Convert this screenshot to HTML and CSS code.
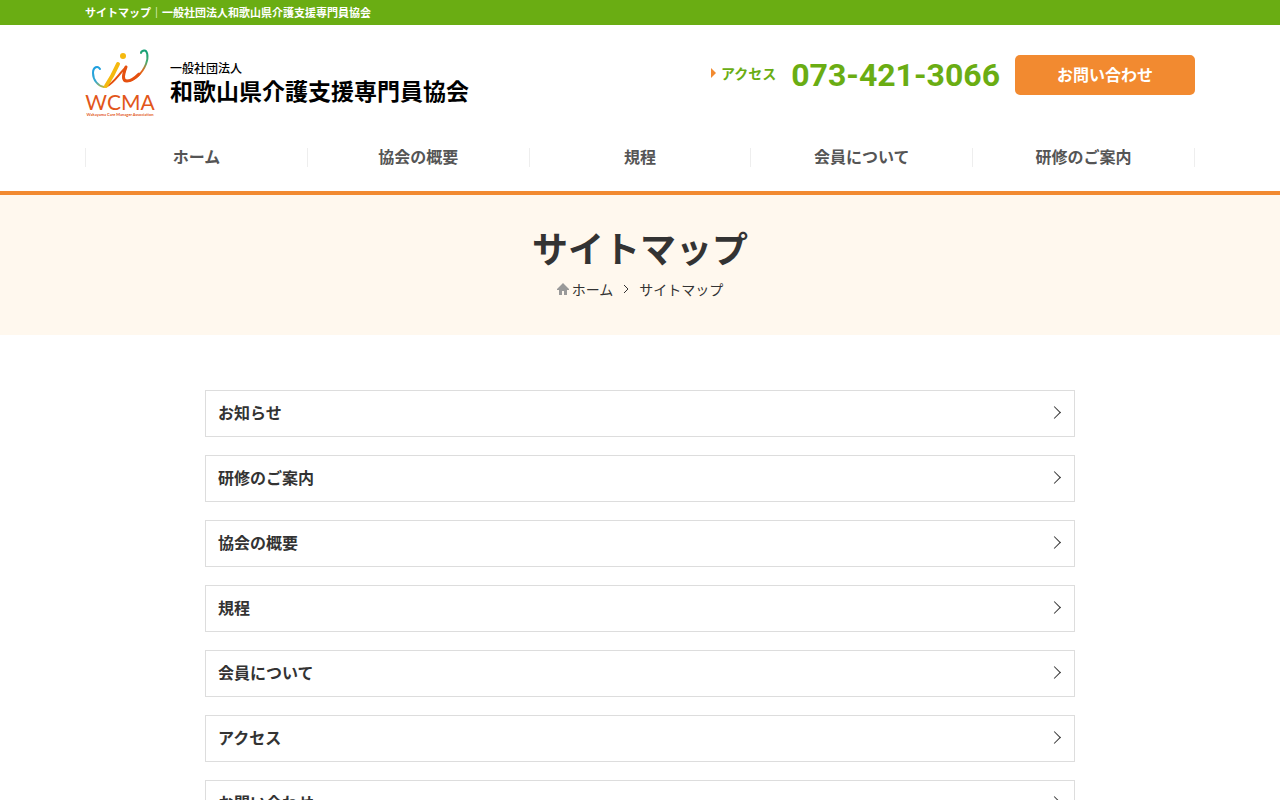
FILE: index.html
```html
<!DOCTYPE html>
<html lang="ja">
<head>
	<meta charset="UTF-8">
	<meta name="viewport" content="width=device-width, initial-scale=1.0">
	<title>サイトマップ｜一般社団法人和歌山県介護支援専門員協会</title>
	<link rel="stylesheet" href="styles.css">
</head>
<body>
	<header class="header">
		<div class="topbar">
			<h1 class="container topbar-text">サイトマップ｜一般社団法人和歌山県介護支援専門員協会</h1>
		</div>
		<div class="container header-main">
			<a class="logo" href="#">
				<svg class="logo-mark" viewBox="0 0 70 68" width="70" height="68" aria-hidden="true">
					<defs>
						<linearGradient id="swoosh-right" gradientUnits="userSpaceOnUse" x1="62" y1="2" x2="50" y2="30">
							<stop offset="0" stop-color="#12a077"/>
							<stop offset="0.35" stop-color="#4cab6e"/>
							<stop offset="0.65" stop-color="#e36a1c"/>
							<stop offset="1" stop-color="#e5500f"/>
						</linearGradient>
						<linearGradient id="swoosh-left" gradientUnits="userSpaceOnUse" x1="10" y1="18" x2="20" y2="38">
							<stop offset="0" stop-color="#1e9fe0"/>
							<stop offset="0.6" stop-color="#35a9cf"/>
							<stop offset="1" stop-color="#c9b62c"/>
						</linearGradient>
					</defs>
					<g fill="none" stroke-linecap="round" stroke-linejoin="round">
						<path d="M15 20C13 16 8 18 8 24C8 31 13 37 19 38" stroke="url(#swoosh-left)" stroke-width="2"/>
						<path d="M22 37C28 35 34 25 41 18C38 26 37 32 42 32C49 32 57 25 61 15C64 7 62 1 59 1.500C57 2 56 3 56 4" stroke="url(#swoosh-right)" stroke-width="2"/>
						<path d="M41 18C38 26 37 32 42 32C46 32 50 29 54 25" stroke="#e5500f" stroke-width="3"/>
						<path d="M33 15C29 24 25 31 21 37" stroke="#f5b90f" stroke-width="4"/>
					</g>
					<circle cx="38" cy="7" r="3" fill="#f5b90f"/>
					<text class="mark-name" x="35" y="61" text-anchor="middle">WCMA</text>
					<text class="mark-sub" x="35" y="67" text-anchor="middle">Wakayama Care Manager Association</text>
				</svg>
				<span class="logo-text">
					<span class="logo-kind">一般社団法人</span>
					<span class="logo-name">和歌山県介護支援専門員協会</span>
				</span>
			</a>
			<div class="header-contact">
				<a class="access" href="#">アクセス</a>
				<a class="tel" href="tel:073-421-3066">073-421-3066</a>
				<a class="btn-contact" href="#">お問い合わせ</a>
			</div>
		</div>
		<nav class="container gnav">
			<a href="#">ホーム</a>
			<a href="#">協会の概要</a>
			<a href="#">規程</a>
			<a href="#">会員について</a>
			<a href="#">研修のご案内</a>
		</nav>
	</header>

	<div class="page-title">
		<h2>サイトマップ</h2>
		<div class="breadcrumb">
			<a href="#">
				<svg viewBox="0 0 12 12" width="12" height="12" aria-hidden="true"><path d="M6 0L12 6V7H10V12H7V8H5V12H2V7H0V6Z" fill="#999"/></svg>
				ホーム
			</a>
			<svg viewBox="0 0 6 10" width="6" height="10" aria-hidden="true"><path d="M1 1L5 5L1 9" fill="none" stroke="#333"/></svg>
			<span>サイトマップ</span>
		</div>
	</div>

	<main>
		<ul class="sitemap">
			<li><a href="#">お知らせ</a></li>
			<li><a href="#">研修のご案内</a></li>
			<li><a href="#">協会の概要</a></li>
			<li><a href="#">規程</a></li>
			<li><a href="#">会員について</a></li>
			<li><a href="#">アクセス</a></li>
			<li><a href="#">お問い合わせ</a></li>
		</ul>
	</main>
</body>
</html>
```

FILE: styles.css
```css
* {
	box-sizing: border-box;
}
body {
	margin: 0;
	font-family: "Noto Sans CJK JP", sans-serif;
	font-size: 16px;
	line-height: 24px;
	color: #333;
	background: #fff;
}
a {
	color: inherit;
	text-decoration: none;
}
.container {
	max-width: 1110px;
	margin: 0 auto;
}
.header {
	border-bottom: 4px solid #f28a30;
}
.topbar {
	background: #6aad13;
	color: #fff;
}
.topbar-text {
	font-size: 11px;
	line-height: 25px;
	font-weight: bold;
}
.header-main {
	display: flex;
	justify-content: space-between;
	align-items: flex-start;
	padding-top: 24px;
}
.logo {
	display: flex;
	gap: 15px;
	color: #000;
}
.logo-mark {
	overflow: visible;
}
.mark-name {
	font-family: Lato, sans-serif;
	font-size: 21px;
	fill: #e2561a;
}
.mark-sub {
	font-family: Lato, sans-serif;
	font-size: 4px;
	font-weight: bold;
	fill: #e2561a;
}
.logo-text {
	display: flex;
	flex-direction: column;
	padding-top: 11px;
	font-weight: 500;
}
.logo-kind {
	font-size: 12px;
	line-height: 16px;
}
.logo-name {
	font-size: 23px;
	line-height: 28px;
	font-weight: bold;
}
.header-contact {
	display: flex;
	align-items: center;
	gap: 15px;
	padding-top: 6px;
}
.access {
	display: flex;
	align-items: center;
	gap: 5px;
	padding-bottom: 4px;
	font-size: 14px;
	font-weight: bold;
	color: #6aad13;
}
.access::before {
	content: "";
	border: 5px solid transparent;
	border-left-color: #f28a30;
	border-right: 0;
}
.tel {
	font-family: Roboto, sans-serif;
	font-size: 32px;
	line-height: 40px;
	font-weight: bold;
	color: #6aad13;
}
.btn-contact {
	width: 180px;
	padding-bottom: 2px;
	border-radius: 5px;
	background: #f28a30;
	color: #fff;
	font-weight: bold;
	line-height: 38px;
	text-align: center;
}
.gnav {
	display: flex;
	padding: 31px 0 24px;
}
.gnav a {
	flex: 1;
	padding-bottom: 2px;
	border-right: 1px solid #eee;
	font-weight: bold;
	line-height: 17px;
	text-align: center;
	color: #555;
}
.gnav a:first-child {
	border-left: 1px solid #eee;
}
.page-title {
	padding: 26px 0 34px;
	background: #fff8ee;
	text-align: center;
}
.page-title h2 {
	margin: 0 0 4px;
	font-size: 36px;
	line-height: 52px;
}
.breadcrumb {
	display: flex;
	justify-content: center;
	align-items: center;
	gap: 10px;
	font-size: 14px;
}
.breadcrumb a {
	display: flex;
	align-items: center;
	gap: 3px;
}
.sitemap {
	display: flex;
	flex-direction: column;
	gap: 18px;
	max-width: 870px;
	margin: 0 auto;
	padding: 55px 0;
	list-style: none;
}
.sitemap a {
	display: flex;
	justify-content: space-between;
	align-items: center;
	padding: 0 15px 2px 12px;
	border: 1px solid #ddd;
	font-weight: bold;
	line-height: 43px;
}
.sitemap a::after {
	content: "";
	width: 8px;
	height: 8px;
	border: solid #333;
	border-width: 1px 1px 0 0;
	transform: rotate(45deg);
}
```
